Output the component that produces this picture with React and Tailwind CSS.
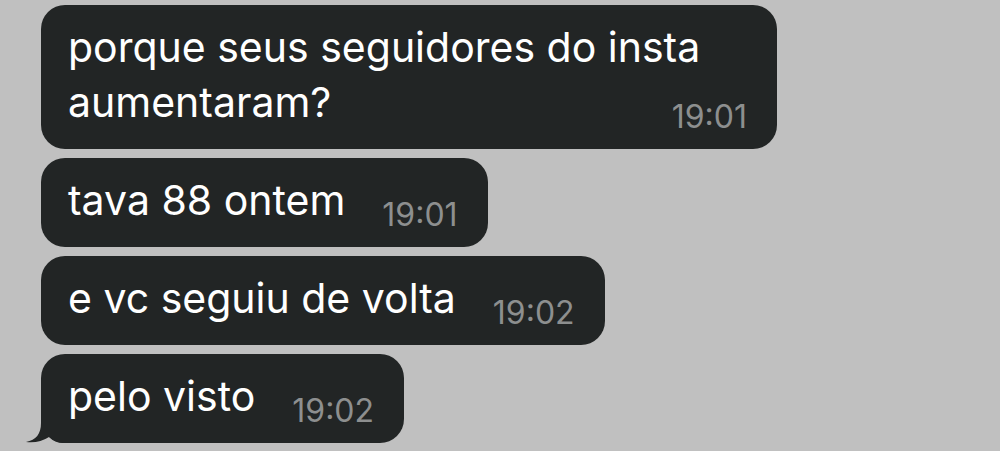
const MESSAGES = [
  { id: 1, text: "porque seus seguidores do insta aumentaram?", time: "19:01" },
  { id: 2, text: "tava 88 ontem", time: "19:01" },
  { id: 3, text: "e vc seguiu de volta", time: "19:02" },
  { id: 4, text: "pelo visto", time: "19:02", tail: true },
];

function Tail() {
  return (
    <svg
      className="absolute -left-4 -bottom-px"
      width="44"
      height="30"
      viewBox="0 0 44 30"
      aria-hidden
    >
      <path
        d="M16 0 L16 9 C16 20 11 26 1 28 Q14 29.5 24 23 Q30 29 38 29 L44 29 L44 0 Z"
        fill="#222525"
      />
    </svg>
  );
}

function Bubble({ text, time, tail }) {
  return (
    <div className="relative w-fit max-w-[736px] rounded-[24px] bg-[#222525] pt-[15px] pr-[30px] pb-[19px] pl-[27px]">
      {tail && <Tail />}
      <div className="relative text-[41px] leading-[55px] text-white after:clear-both after:block after:content-['']">
        {text}
        <span className="float-right mt-[30px] ml-[37px] text-[32px] leading-[24px] text-[#8d8f8f]">
          {time}
        </span>
      </div>
    </div>
  );
}

export default function App() {
  return (
    <div className="h-[451px] w-[1000px] overflow-hidden bg-[#c0c0c0] font-['Inter',sans-serif]">
      <div className="flex flex-col items-start gap-[9px] pt-[5px] pl-[41px]">
        {MESSAGES.map((m) => (
          <Bubble key={m.id} {...m} />
        ))}
      </div>
    </div>
  );
}
